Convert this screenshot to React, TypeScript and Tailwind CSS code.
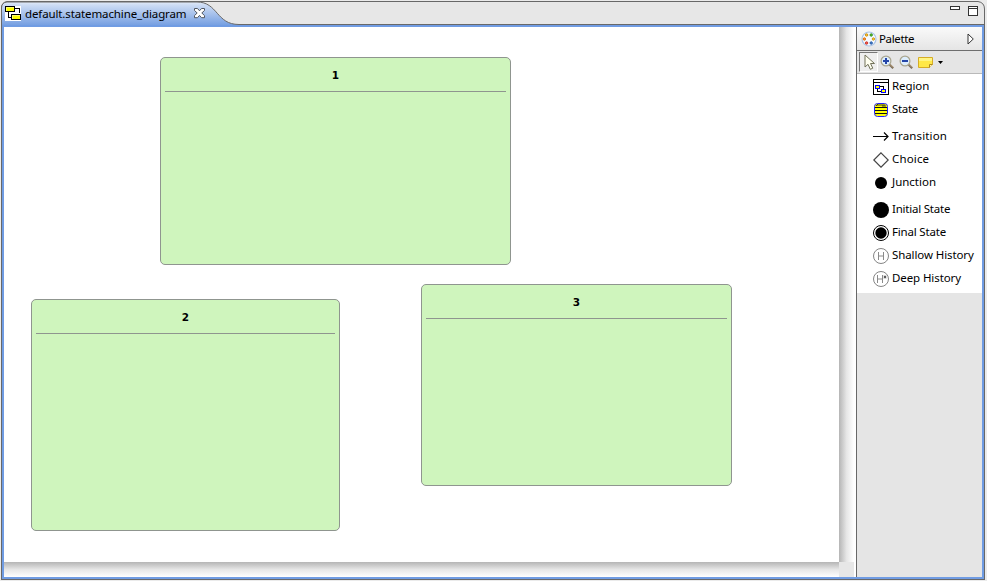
import type { ReactNode } from "react";

type StateNode = { name: string; x: number; y: number; w: number; h: number };

const nodes: StateNode[] = [
  { name: "1", x: 156, y: 30, w: 351, h: 208 },
  { name: "2", x: 27, y: 272, w: 309, h: 232 },
  { name: "3", x: 417, y: 257, w: 311, h: 202 },
];

function StateBox({ node }: { node: StateNode }) {
  return (
    <div
      className="absolute rounded-[5px] border border-[#8f958f] bg-[#cff5bd] px-1"
      style={{ left: node.x, top: node.y, width: node.w, height: node.h }}
    >
      <div className="h-[34px] border-b border-[#8f958f] pt-[11px] text-center font-['DejaVu_Sans',sans-serif] text-[10.5px] leading-[13px] font-bold">
        {node.name}
      </div>
    </div>
  );
}

function Icon({ children }: { children: ReactNode }) {
  return (
    <svg width="16" height="16" viewBox="0 0 16 16" className="mt-px shrink-0">
      {children}
    </svg>
  );
}

function Tool({ label, tracking, children }: { label: string; tracking: string; children: ReactNode }) {
  return (
    <div className="flex h-[23px] items-center gap-[3px] pl-4">
      <Icon>{children}</Icon>
      <span className={`mb-[2px] whitespace-nowrap leading-[15px] ${tracking}`}>{label}</span>
    </div>
  );
}

function HistoryGlyph({ deep = false }: { deep?: boolean }) {
  return (
    <>
      <circle cx="8" cy="8" r="7.5" fill="#fff" stroke="#777" strokeWidth="0.9" />
      <path d={deep ? "M4.5 4v8M9.5 4v8M4.5 8h5" : "M5.5 4v8M10.5 4v8M5.5 8h5"} fill="none" stroke="#8a8a8a" />
      {deep && <path d="M12 4.5v3M10.7 5.2l2.6 1.6M13.3 5.2l-2.6 1.6" stroke="#444" strokeWidth="0.9" />}
    </>
  );
}

function DiagramIcon() {
  return (
    <svg width="16" height="15" viewBox="0 0 16 15" className="shrink-0 bg-white" shapeRendering="crispEdges">
      <path d="M3.5 6v5.5H7M10 2.5h4.5V7" fill="none" stroke="#000" />
      <rect x="0.5" y="0.5" width="9" height="5" fill="#ff0" stroke="#000" />
      <rect x="6.5" y="8.5" width="9" height="5" fill="#ff0" stroke="#000" />
      <path d="M1 1.5h8M1.5 1v4M7 9.5h8M7.5 9v4" stroke="#ffff70" />
    </svg>
  );
}

function Magnifier({ plus = false }: { plus?: boolean }) {
  return (
    <svg width="15" height="15" viewBox="0 0 15 15">
      <path d="M9.5 9.5l3.7 3.7" stroke="#756a5b" strokeWidth="2.2" />
      <path d="M9.8 9.2l3.4 3.4" stroke="#c7a77b" strokeWidth="1" />
      <circle cx="6" cy="6" r="4.9" fill="#dcedfc" stroke="#aaa68f" strokeWidth="1.2" />
      <path d="M3 6h6" stroke="#2445a8" strokeWidth="2" />
      {plus && <path d="M6 3v6" stroke="#2445a8" strokeWidth="2" />}
    </svg>
  );
}

function Header() {
  return (
    <header className="relative h-[27px] shrink-0">
      <svg width="987" height="27" className="absolute inset-0">
        <defs>
          <linearGradient id="tab" x1="0" y1="0" x2="0" y2="1">
            <stop offset="0" stopColor="#e3ebf8" />
            <stop offset="0.12" stopColor="#cddcf4" />
            <stop offset="1" stopColor="#6e9ae0" />
          </linearGradient>
        </defs>
        <path d="M1.5 27V8Q1.5 2.5 7 1.5H978Q984.5 2.5 984.5 9V27" fill="#e7e7e7" stroke="#686868" />
        <path d="M2 27V8Q2 3 7 2H197C218 2 216 24.5 239 24.5V27Z" fill="url(#tab)" />
        <path d="M2 25H984V27H2Z" fill="#709ce3" />
        <path d="M1.5 27V8Q1.5 2.5 7 2H197C218 2 216 24.5 239 24.5H984" fill="none" stroke="#686868" />
      </svg>
      <div className="relative flex h-[27px] items-start pl-[5px]">
        <div className="mt-[6px] flex">
          <DiagramIcon />
        </div>
        <span className="mt-[6px] ml-1 w-[162px] text-[11.5px] leading-[15px] tracking-[-0.12px] whitespace-nowrap">
          default.statemachine_diagram
        </span>
        <svg width="11" height="11" viewBox="0 0 11 11" className="mt-[8px] ml-[7px]">
          <path
            d="M.5.5h3l2 2.3 2-2.3h3v2L7.8 5l2.7 2.6v2.1h-3l-2-2.3-2 2.3h-3V7.6L3.2 5 .5 2.5Z"
            fill="#fff"
            stroke="#505762"
          />
        </svg>
        <svg width="29" height="12" viewBox="0 0 29 12" className="mt-[5px] ml-auto mr-[8px]" shapeRendering="crispEdges">
          <path d="M.5 1.5h9v3h-9z" fill="#fff" stroke="#333" />
          <path d="M18.5 1.5h9v9h-9zM18 3.5h10" fill="#fff" stroke="#333" />
        </svg>
      </div>
    </header>
  );
}

function Palette() {
  return (
    <aside className="flex w-[126px] shrink-0 flex-col border-l border-[#686868] bg-[#e5e5e5]">
      <div className="flex h-6 shrink-0 items-center border-b border-[#6e6e6e] bg-linear-to-b from-[#fafafa] to-[#e5e5e5] pl-[4px]">
        <svg width="16" height="16" viewBox="0 0 16 16">
          <circle cx="8" cy="8" r="7" fill="#f5f9ff" stroke="#aac4e6" strokeWidth="1.2" />
          <g strokeWidth="0.9">
            <circle cx="5.6" cy="4" r="1.2" fill="#ffcd38" stroke="#c88705" />
            <circle cx="10.2" cy="4" r="1.2" fill="#65c931" stroke="#2d8a19" />
            <circle cx="3.4" cy="8" r="1.2" fill="#ff9c36" stroke="#d86b09" />
            <circle cx="12.4" cy="8" r="1.2" fill="#ffd23d" stroke="#cc910c" />
            <circle cx="5.6" cy="12" r="1.2" fill="#fa6555" stroke="#c52b20" />
            <circle cx="10.2" cy="12" r="1.2" fill="#4988dc" stroke="#23539b" />
          </g>
        </svg>
        <span className="ml-[2px] leading-[15px] tracking-[-0.35px]">Palette</span>
        <svg width="8" height="12" viewBox="0 0 8 12" className="ml-auto mr-[7px]">
          <path d="M1 1l5.3 5L1 11Z" fill="#fff" stroke="#333" />
        </svg>
      </div>
      <div className="flex h-[23px] shrink-0 items-center border-b border-[#b9b9b9] pl-[2px]">
        <div className="flex h-5 w-[19px] items-center justify-center border border-t-[#777] border-r-white border-b-white border-l-[#777] bg-[#eee]">
          <svg width="12" height="17" viewBox="0 0 12 17" className="mt-px ml-[2px]">
            <path d="M1 1v12l3-2.7 2.3 5 2.5-1.1L6.5 9.5h4Z" fill="#fffff0" stroke="#72725a" />
          </svg>
        </div>
        <div className="ml-[2px] flex items-center gap-[4px]">
          <Magnifier plus />
          <Magnifier />
          <svg width="16" height="13" viewBox="0 0 16 13" className="mt-px">
            <path d="M.5 1.5h14v7l-3 3H.5Z" fill="#ffe848" stroke="#d5ac26" />
            <path d="M1 2h13v3H1Z" fill="#fff583" />
            <path d="M14.5 8.5h-3v3" fill="#fff6b3" stroke="#ad8823" />
          </svg>
          <svg width="5" height="3" viewBox="0 0 5 3">
            <path d="M0 0h5L2.5 3Z" />
          </svg>
        </div>
      </div>
      <div className="flex flex-col gap-1 bg-white pt-px pb-[3px]">
        <div>
          <Tool label="Region" tracking="tracking-[-0.08px]">
            <g shapeRendering="crispEdges">
              <path d="M.5.5h15v15H.5zM0 3.5h16" fill="#fff" stroke="#000" />
              <path d="M4.5 10v2.5H8M7 7.5h3.5V10" fill="none" stroke="#000" />
              <path d="M2.5 6.5h4v3h-4zM8.5 10.5h4v3h-4z" fill="#ff0" stroke="#00f" />
            </g>
          </Tool>
          <Tool label="State" tracking="tracking-[-0.3px]">
            <rect x="1.5" y="1.5" width="13" height="13" rx="3" fill="#ff0" stroke="#22f" />
            <path d="M2 5.5h12M2 8.5h12M2 11.5h12" stroke="#111" shapeRendering="crispEdges" />
            <path d="M3 4l2-2v2M7 2v2M9 2v2h2M11 2v2h2" fill="none" stroke="#222" strokeWidth="0.9" />
          </Tool>
        </div>
        <div>
          <Tool label="Transition" tracking="tracking-[0.15px]">
            <path d="M0 7.5h15M11 3.5l4 4-4 4" fill="none" stroke="#000" strokeWidth="1.2" />
          </Tool>
          <Tool label="Choice" tracking="tracking-[0.15px]">
            <path d="M8 .8L15.2 8 8 15.2.8 8Z" fill="#fff" stroke="#444" strokeWidth="1.2" />
          </Tool>
          <Tool label="Junction" tracking="tracking-normal">
            <circle cx="8" cy="8" r="6" />
          </Tool>
        </div>
        <div>
          <Tool label="Initial State" tracking="tracking-[-0.22px]">
            <circle cx="8" cy="8" r="8" />
          </Tool>
          <Tool label="Final State" tracking="tracking-[-0.18px]">
            <circle cx="8" cy="8" r="7.5" fill="#fff" stroke="#000" />
            <circle cx="8" cy="8" r="5.7" />
          </Tool>
          <Tool label="Shallow History" tracking="tracking-[-0.1px]">
            <HistoryGlyph />
          </Tool>
          <Tool label="Deep History" tracking="tracking-[-0.1px]">
            <HistoryGlyph deep />
          </Tool>
        </div>
      </div>
    </aside>
  );
}

export default function App() {
  return (
    <div className="flex h-[581px] w-[987px] flex-col overflow-hidden bg-[#ebebeb] font-['Noto_Sans',sans-serif] text-[11.5px] text-black">
      <Header />
      <div className="mr-[2px] ml-px flex h-[553px] shrink-0 border-x border-b border-[#686868]">
        <div className="flex w-full border-x-2 border-b-2 border-[#709ce3] bg-white">
          <main className="flex w-[850px] shrink-0 flex-col">
            <div className="flex h-[535px]">
              <div className="relative w-[835px] bg-white">
                {nodes.map((node) => (
                  <StateBox key={node.name} node={node} />
                ))}
              </div>
              <div className="w-[15px] bg-linear-to-r from-[#b5b5b5] via-[#e6e6e6] to-white" />
            </div>
            <div className="flex h-[15px]">
              <div className="w-[835px] bg-linear-to-b from-[#b5b5b5] via-[#e6e6e6] to-white" />
              <div className="w-[15px] bg-[#e7e7e7]" />
            </div>
          </main>
          <div className="w-[2px] bg-white" />
          <Palette />
        </div>
      </div>
    </div>
  );
}
